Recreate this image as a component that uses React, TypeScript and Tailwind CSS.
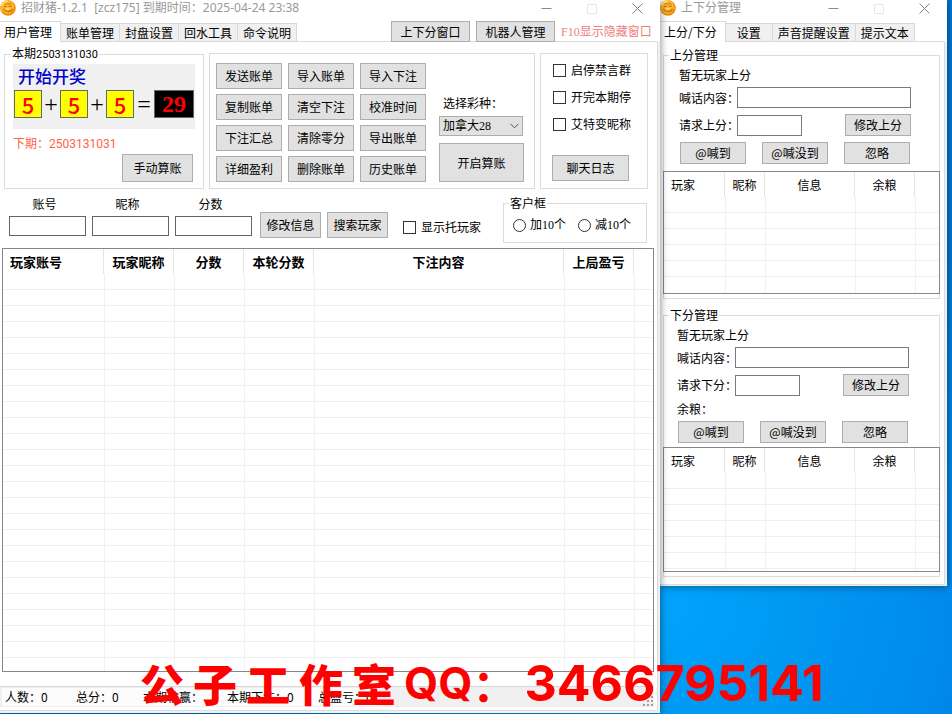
import { useState } from "react";
import type { ReactNode } from "react";
import clsx from "clsx";

type Column = {
  label: string;
  // width class, left empty for the column that takes the remaining space
  width: string;
};

const mainTabs = ["用户管理", "账单管理", "封盘设置", "回水工具", "命令说明"];
const scoreTabs = ["上分/下分", "设置", "声音提醒设置", "提示文本"];

const billActions = [
  "发送账单", "导入账单", "导入下注",
  "复制账单", "清空下注", "校准时间",
  "下注汇总", "清除零分", "导出账单",
  "详细盈利", "删除账单", "历史账单",
];

const switches = ["启停禁言群", "开完本期停", "艾特变昵称"];

const studioName = ["公", "子", "工", "作", "室"];

const playerColumns: Column[] = [
  { label: "玩家账号", width: "w-[101px]" },
  { label: "玩家昵称", width: "w-[70px]" },
  { label: "分数", width: "w-[70px]" },
  { label: "本轮分数", width: "w-[70px]" },
  { label: "下注内容", width: "" },
  { label: "上局盈亏", width: "w-[70px]" },
  { label: "", width: "w-[19px]" },
];

const requestColumns: Column[] = [
  { label: "玩家", width: "w-[61px]" },
  { label: "昵称", width: "w-[40px]" },
  { label: "信息", width: "" },
  { label: "余粮", width: "w-[60px]" },
  { label: "", width: "w-[24px]" },
];

function Button({ className, children }: { className?: string; children: ReactNode }) {
  return (
    <button
      type="button"
      className={clsx(
        "shrink-0 border border-[#adadad] bg-[#e1e1e1] text-center leading-4 whitespace-nowrap hover:border-[#0078d7] hover:bg-[#e5f1fb]",
        className
      )}
    >
      {children}
    </button>
  );
}

function CoinIcon() {
  return (
    <svg className="size-4 shrink-0" viewBox="0 0 16 16" aria-hidden="true">
      <circle cx="8" cy="8" r="7.8" fill="#f08c10" />
      <circle cx="7.4" cy="7" r="6.8" fill="#fdb52a" />
      <path d="M1.8 6C2.6 3 5 1.2 8 1.2" stroke="#ffe27a" strokeWidth="1.4" fill="none" />
      <path d="M4.6 4.6 6.2 3.6l1.6.8 2.4-1.2 1.2 1.4" stroke="#d9780f" strokeWidth="1" fill="none" />
      <path d="M3.8 6.6h2.6M8.8 6.2h2.8" stroke="#b9600a" strokeWidth="1" fill="none" />
      <path d="M3.6 8.8c.4 3.4 7.6 3.8 9 .2" stroke="#d06c0c" strokeWidth="1.2" fill="none" />
      <path d="M5.8 8.6h3.8" stroke="#ffe88c" strokeWidth="1.4" fill="none" />
    </svg>
  );
}

function TitleBar({ title }: { title: string }) {
  return (
    <header className="flex h-[21px] items-start">
      <CoinIcon />
      <h1 className="ml-[5px] flex-1 font-['Noto_Sans','Noto_Sans_CJK_SC',sans-serif] text-[12px] leading-4 font-normal whitespace-pre text-[#999999]">
        {title}
      </h1>
      <button type="button" aria-label="最小化" className="flex h-4 w-[45px] items-center justify-center">
        <svg className="size-[11px]" viewBox="0 0 11 11" fill="none" stroke="#8a8a8a">
          <path d="M0.5 5.5h10" />
        </svg>
      </button>
      <button type="button" aria-label="最大化" disabled className="flex h-4 w-[45px] items-center justify-center">
        <svg className="size-[11px]" viewBox="0 0 11 11" fill="none" stroke="#e6e6e6">
          <path d="M1.5 1.5h9v9h-9z" />
        </svg>
      </button>
      <button type="button" aria-label="关闭" className="flex h-4 w-[46px] items-center justify-center">
        <svg className="size-[11px]" viewBox="0 0 11 11" fill="none" stroke="#808080">
          <path d="M0.5 0.5l10 10M10.5 0.5l-10 10" />
        </svg>
      </button>
    </header>
  );
}

function Tabs({ names }: { names: string[] }) {
  const [active, setActive] = useState(0);

  return (
    <div role="tablist" className="flex items-end">
      {names.map((name, i) => (
        <button
          key={name}
          type="button"
          role="tab"
          aria-selected={i === active}
          onClick={() => setActive(i)}
          className={clsx(
            "-mb-px border-t border-r border-[#d9d9d9] text-center leading-4 whitespace-nowrap",
            i === active ? "h-[21px] bg-white pr-2 pl-1" : "h-[19px] border-b bg-[#f0f0f0]",
            i !== active && (name === "设置" ? "px-[11px]" : "px-[5px]")
          )}
        >
          {name}
        </button>
      ))}
    </div>
  );
}

function Grid({
  caption,
  columns,
  rows,
  tail,
  bold,
  className,
}: {
  caption: string;
  columns: Column[];
  rows: number;
  tail: string;
  bold?: boolean;
  className?: string;
}) {
  return (
    <div className={clsx("border border-[#828790] bg-white", className)}>
      <table aria-label={caption} className="w-full table-fixed border-separate border-spacing-0">
        <thead>
          <tr>
            {columns.map((col, i) => (
              <th
                key={i}
                scope="col"
                className={clsx(
                  "h-[25px] p-0 leading-4 whitespace-nowrap",
                  col.width,
                  bold ? "text-[13px] font-bold" : "text-[12px] font-normal",
                  i === 0 ? "pl-[7px] text-left" : "text-center",
                  i < columns.length - 1 && "border-r border-[#e5e5e5]"
                )}
              >
                {col.label}
              </th>
            ))}
          </tr>
        </thead>
        <tbody>
          {Array.from({ length: rows }, (_, r) => (
            <tr key={r}>
              {columns.map((_, i) => (
                <td key={i} className={clsx("h-4 border-b border-[#f0f0f0] p-0", i > 0 && "border-l")} />
              ))}
            </tr>
          ))}
          {/* cut off row at the bottom edge */}
          <tr>
            {columns.map((_, i) => (
              <td key={i} className={clsx("border-[#f0f0f0] p-0", tail, i > 0 && "border-l")} />
            ))}
          </tr>
        </tbody>
      </table>
    </div>
  );
}

function CheckBox({ label, className }: { label: string; className?: string }) {
  return (
    <label className={clsx("flex items-center gap-[5px] leading-4 whitespace-nowrap", className)}>
      <input
        type="checkbox"
        className="size-[13px] shrink-0 appearance-none border border-[#333333] bg-white checked:bg-[#0078d7]"
      />
      {label}
    </label>
  );
}

function Radio({ label }: { label: string }) {
  return (
    <label className="flex items-center gap-1 font-['Liberation_Serif','Noto_Sans_CJK_SC',serif] leading-4 whitespace-nowrap">
      <input
        type="radio"
        name="customer"
        className="size-[13px] shrink-0 appearance-none rounded-full border border-[#333333] bg-white checked:bg-[#0078d7]"
      />
      {label}
    </label>
  );
}

function Ball({ value }: { value: number }) {
  return (
    <span className="flex size-7 items-center justify-center border border-[#666666] bg-[#ffff00] font-['Noto_Sans_CJK_SC',sans-serif] text-[22px] font-medium text-[#ff0000]">
      {value}
    </span>
  );
}

function DrawBox() {
  return (
    <fieldset className="w-[200px] shrink-0 border border-[#dcdcdc] pb-[6px]">
      <legend className="ml-[6px] px-px leading-4">
        本期<span className="font-['Roboto',sans-serif] text-[11px]">2503131030</span>
      </legend>
      <div className="mx-2 mt-px h-[65px] bg-[#f0f0f0] pt-px">
        <div className="ml-[5px] text-[17px] leading-[22px] font-medium text-[#0000c8]">开始开奖</div>
        <div className="mt-[3px] ml-px flex h-7 items-center font-['Liberation_Serif',serif] text-[24px] leading-7">
          <Ball value={5} />
          <span className="w-[18px] text-center">+</span>
          <Ball value={5} />
          <span className="w-[18px] text-center">+</span>
          <Ball value={5} />
          <span className="w-5 text-center">=</span>
          <span className="flex h-7 w-10 items-center justify-center border border-[#666666] bg-black font-bold text-[#ff0000]">
            29
          </span>
        </div>
      </div>
      <div className="mt-[7px] ml-2 font-['Roboto','Noto_Sans_CJK_SC',sans-serif] leading-4 text-[#ff6347]">
        下期：2503131031
      </div>
      <div className="mt-[2px] mr-[10px] flex justify-end">
        <Button className="h-7 w-[71px]">手动算账</Button>
      </div>
    </fieldset>
  );
}

function ActionBox() {
  return (
    <div className="mt-2 flex flex-1 items-start border border-[#dcdcdc] pt-[9px] pl-[6px]">
      <div className="grid grid-cols-3 gap-x-[6px] gap-y-[5px]">
        {billActions.map((name) => (
          <Button key={name} className="h-[26px] w-[66px]">
            {name}
          </Button>
        ))}
      </div>
      <div className="ml-[13px] pt-8">
        <label htmlFor="lottery" className="ml-1 block leading-4">
          选择彩种：
        </label>
        <div className="relative mt-[5px] w-[84px]">
          <select
            id="lottery"
            className="block h-5 w-full appearance-none border border-[#adadad] bg-[#e1e1e1] pl-[3px] font-['Liberation_Serif','Noto_Sans_CJK_SC',serif] leading-4"
          >
            <option>加拿大28</option>
          </select>
          <svg
            className="pointer-events-none absolute top-[7px] right-1 h-[6px] w-[9px]"
            viewBox="0 0 9 6"
            fill="none"
            stroke="#555555"
          >
            <path d="M0.5 0.8l4 4 4-4" />
          </svg>
        </div>
        <Button className="mt-[7px] h-[39px] w-[85px]">开启算账</Button>
      </div>
    </div>
  );
}

function SwitchBox() {
  return (
    <div className="mt-2 flex w-[108px] shrink-0 flex-col border border-[#dcdcdc] pt-2 pb-[7px] pl-3">
      <div className="flex flex-col gap-[11px]">
        {switches.map((name) => (
          <CheckBox key={name} label={name} />
        ))}
      </div>
      <Button className="mt-auto -ml-px h-[26px] w-[77px]">聊天日志</Button>
    </div>
  );
}

function SearchRow() {
  return (
    <div className="flex items-end pt-[6px] pr-[10px] pb-[5px] pl-[9px]">
      <div className="mb-[7px] flex gap-[6px]">
        {["账号", "昵称", "分数"].map((name) => (
          <label key={name} className="flex w-[77px] flex-col gap-1 leading-4">
            <span className="pr-[6px] text-center">{name}</span>
            <input type="text" className="h-5 w-full border border-[#646464] bg-white px-1" />
          </label>
        ))}
      </div>
      <div className="mb-[5px] ml-2 flex gap-[6px]">
        <Button className="h-[26px] w-[61px]">修改信息</Button>
        <Button className="h-[26px] w-[61px]">搜索玩家</Button>
      </div>
      <CheckBox label="显示托玩家" className="mb-2 ml-[15px]" />
      <fieldset className="ml-auto w-[144px] border border-[#dcdcdc] pb-[9px]">
        <legend className="ml-[5px] px-px leading-4">客户框</legend>
        <div className="mt-[6px] ml-[9px] flex gap-3">
          <Radio label="加10个" />
          <Radio label="减10个" />
        </div>
      </fieldset>
    </div>
  );
}

function StatusBar() {
  return (
    <footer className="mr-[3px] flex h-[21px] items-stretch border-t border-[#d7d7d7] bg-[#f0f0f0] leading-5 whitespace-nowrap">
      <div className="my-px ml-[2px] flex bg-[#fcfcfc] pl-[3px] leading-[18px]">
        <span className="w-[71px]">人数：0</span>
        <span className="w-[67px]">总分：0</span>
        <span className="w-[84px]">本期输赢：</span>
        <span className="w-[91px]">本期下注：0</span>
        <span className="w-[60px]">总盈亏：0</span>
      </div>
      <svg className="mt-auto ml-auto size-[11px]" viewBox="0 0 11 11" fill="#a0a0a0" aria-hidden="true">
        <path d="M8 0h2v2h-2zM4 4h2v2h-2zM8 4h2v2h-2zM0 8h2v2h-2zM4 8h2v2h-2zM8 8h2v2h-2z" />
      </svg>
    </footer>
  );
}

function MainWindow() {
  return (
    <section className="z-10 mb-[2px] flex min-w-[660px] flex-1 flex-col bg-white shadow-[0_0_8px_rgba(0,0,0,0.5)]">
      <TitleBar title="招财猪-1.2.1  [zcz175] 到期时间：2025-04-24 23:38" />
      <div className="mr-[2px] flex items-end border-b border-[#dcdcdc]">
        <Tabs names={mainTabs} />
        <div className="-mb-px ml-auto flex items-center">
          <Button className="h-[21px] w-[79px]">上下分窗口</Button>
          <Button className="ml-[6px] h-[21px] w-[79px]">机器人管理</Button>
          <span className="ml-[6px] w-[97px] font-['Liberation_Serif','Noto_Sans_CJK_SC',serif] leading-4 whitespace-nowrap text-[#f08080]">
            F10显示隐藏窗口
          </span>
        </div>
      </div>
      <div className="flex flex-1 flex-col border-r-2 border-b-2 border-[#f0f0f0]">
        <main className="flex flex-1 flex-col border-r border-b border-[#dcdcdc] pt-[3px] pb-[3px]">
          <div className="flex gap-[5px] pr-[9px] pl-1">
            <DrawBox />
            <ActionBox />
            <SwitchBox />
          </div>
          <SearchRow />
          <Grid
            caption="玩家列表"
            columns={playerColumns}
            rows={24}
            tail="h-[13px]"
            bold
            className="mr-[3px] ml-[2px] flex-1"
          />
          <div className="h-[14px]" />
          <StatusBar />
        </main>
      </div>
    </section>
  );
}

function ScoreBox({
  title,
  id,
  request,
  balance,
  rows,
  tail,
}: {
  title: string;
  id: string;
  request: string;
  balance?: boolean;
  rows: number;
  tail: string;
}) {
  return (
    <fieldset className="border border-[#dcdcdc] pb-1">
      <legend className="ml-[5px] px-px leading-4">{title}</legend>
      <div className={clsx("pt-1 leading-4", balance ? "pr-[30px] pl-[13px]" : "pr-7 pl-[15px]")}>
        <p>暂无玩家上分</p>
        <div className="mt-1 flex items-center">
          <label htmlFor={id + "-message"} className="w-[58px] whitespace-nowrap">
            喊话内容：
          </label>
          <input
            id={id + "-message"}
            type="text"
            className="h-[21px] min-w-0 flex-1 border border-[#7a7a7a] bg-white px-1"
          />
        </div>
        <div className="mt-[6px] flex items-center">
          <label htmlFor={id + "-request"} className="w-[58px] whitespace-nowrap">
            {request}
          </label>
          <input
            id={id + "-request"}
            type="text"
            className="h-[21px] w-[65px] border border-[#7a7a7a] bg-white px-1"
          />
          <Button className="ml-auto h-[22px] w-[66px]">修改上分</Button>
        </div>
        {balance && <p className="mt-[5px]">余粮：</p>}
        <div className={clsx("ml-px flex gap-4", balance ? "mt-1 mb-1" : "mt-[6px] mb-[7px]")}>
          <Button className="h-[22px] w-[66px]">@喊到</Button>
          <Button className="h-[22px] w-[66px]">@喊没到</Button>
          <Button className="h-[22px] w-[66px]">忽略</Button>
        </div>
      </div>
      <Grid caption={title} columns={requestColumns} rows={rows} tail={tail} className="-mx-px" />
    </fieldset>
  );
}

function ScoreWindow() {
  return (
    <section className="mr-[5px] flex w-[287px] shrink-0 flex-col self-start bg-white shadow-[0_0_8px_rgba(0,0,0,0.5)]">
      <TitleBar title="上下分管理" />
      <div className="mr-[2px] flex items-end border-b border-[#dcdcdc]">
        <Tabs names={scoreTabs} />
      </div>
      <div className="border-r-2 border-b border-[#f0f0f0]">
        <div className="flex flex-col gap-2 border-r border-b border-[#dcdcdc] pt-[5px] pr-1 pb-[7px] pl-[3px]">
          <ScoreBox title="上分管理" id="up" request="请求上分：" rows={5} tail="h-4" />
          <ScoreBox title="下分管理" id="down" request="请求下分：" balance rows={6} tail="h-[2px]" />
        </div>
      </div>
    </section>
  );
}

export default function App() {
  return (
    <div className="relative flex min-h-screen overflow-hidden bg-[#0078d7] bg-[radial-gradient(circle_at_70%_84%,#00a4fc_0%,#0099f2_14%,#008bec_30%,#0078d7_50%)] font-['Noto_Sans_CJK_SC',sans-serif] text-[12px] leading-4 text-black">
      <MainWindow />
      <ScoreWindow />
      <div className="pointer-events-none absolute bottom-0 left-[140px] z-20 flex items-center gap-2 leading-[64px] font-bold whitespace-nowrap text-[#ff0000]">
        <div className="flex gap-[9px] text-[44px] font-black">
          {studioName.map((char) => (
            <span key={char}>{char}</span>
          ))}
        </div>
        <div className="flex items-center">
          <span className="font-['Inter',sans-serif] text-[44px]">QQ</span>
          <span className="text-[44px]">：</span>
        </div>
        <span className="font-['Inter',sans-serif] text-[50px]">3466795141</span>
      </div>
    </div>
  );
}
